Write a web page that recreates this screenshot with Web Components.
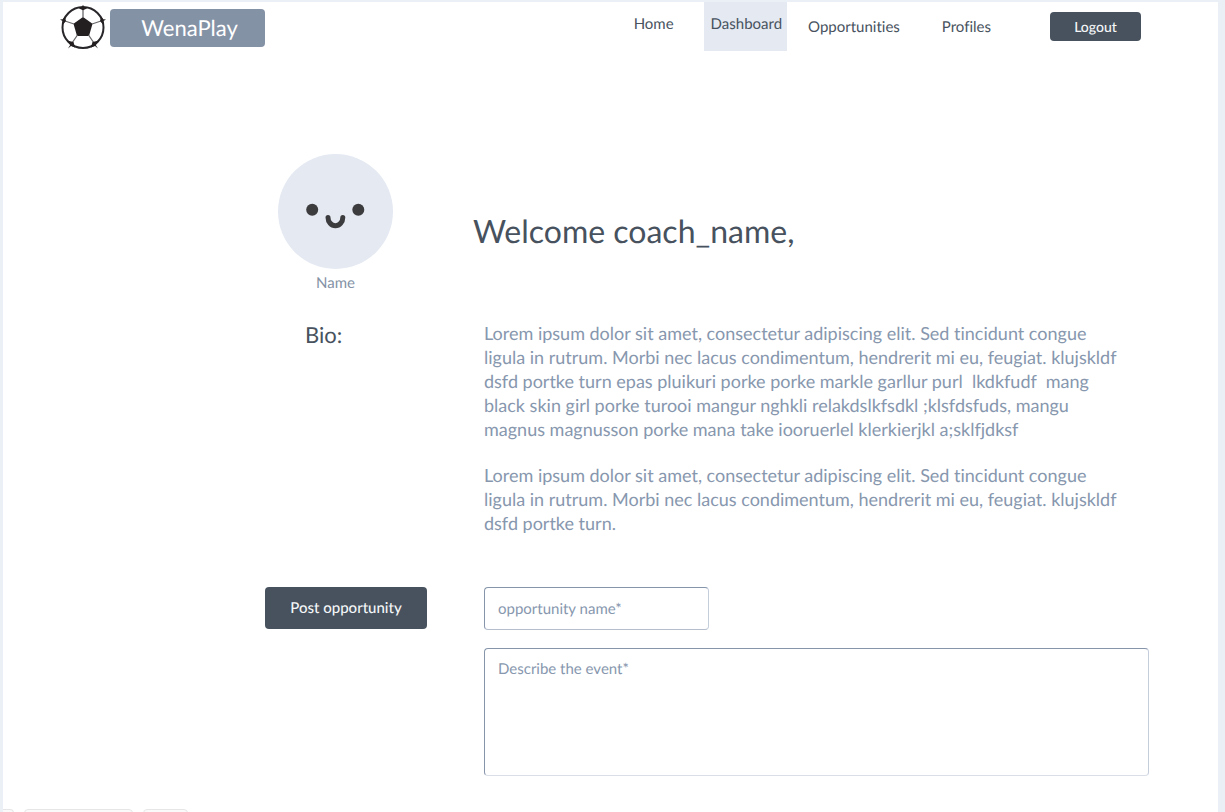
<!DOCTYPE html>
<html lang="en">
<head>
<meta charset="utf-8">
<meta name="viewport" content="width=device-width, initial-scale=1">
<title>WenaPlay – Dashboard</title>
<style>
  :root {
    --page: #ebeff6;
    --tint: #e4e9f2;
    --ink: #47525e;
    --muted: #8492a6;
    --text: #8797ae;
  }
  body {
    margin: 0;
    background: var(--page);
    color: var(--ink);
    font-family: Lato, "Open Sans", sans-serif;
    font-size: 15px;
    line-height: 20px;
    font-variant-ligatures: no-common-ligatures;
    text-rendering: geometricPrecision;
  }
</style>
</head>
<body>
<wena-page>
  <wena-header slot="header">
    <wena-link href="#home" high>Home</wena-link>
    <wena-link href="#dashboard" high current>Dashboard</wena-link>
    <wena-link href="#opportunities">Opportunities</wena-link>
    <wena-link href="#profiles">Profiles</wena-link>
    <wena-button slot="action" compact>Logout</wena-button>
  </wena-header>
  <wena-avatar slot="avatar">Name</wena-avatar>
  <wena-heading slot="welcome" level="1">Welcome coach_name,</wena-heading>
  <wena-heading slot="label" level="2">Bio:</wena-heading>
  <wena-bio slot="bio">
    <p>Lorem ipsum dolor sit amet, consectetur adipiscing elit. Sed tincidunt congue ligula in rutrum. Morbi nec lacus condimentum, hendrerit mi eu, feugiat. klujskldf dsfd portke turn epas pluikuri porke porke markle garllur purl&nbsp; lkdkfudf&nbsp; mang black skin girl porke turooi mangur nghkli relakdslkfsdkl ;klsfdsfuds, mangu magnus magnusson porke mana take iooruerlel klerkierjkl a;sklfjdksf</p>
    <p>Lorem ipsum dolor sit amet, consectetur adipiscing elit. Sed tincidunt congue ligula in rutrum. Morbi nec lacus condimentum, hendrerit mi eu, feugiat. klujskldf dsfd portke turn.</p>
  </wena-bio>
  <wena-button slot="post">Post opportunity</wena-button>
  <wena-form slot="form"></wena-form>
  <wena-tabs slot="footer"></wena-tabs>
</wena-page>

<script>
const define = (name, html, setup) => {
  const template = document.createElement('template');
  template.innerHTML = html;
  customElements.define(name, class extends HTMLElement {
    constructor() {
      super();
      this.attachShadow({ mode: 'open' }).append(template.content.cloneNode(true));
    }
    connectedCallback() {
      if (setup) setup(this, this.shadowRoot);
    }
  });
};

define('wena-page', `
  <style>
    :host { display: block; padding: 2px 7px 0 3px; }
    .sheet {
      box-sizing: border-box;
      min-height: calc(100vh - 2px);
      display: flex;
      flex-direction: column;
      background: #fff;
    }
    main {
      flex: 1;
      display: grid;
      grid-template-columns: 162px minmax(0, 1fr);
      column-gap: 57px;
      align-content: start;
      padding: 103px 69px 32px 262px;
    }
    ::slotted([slot=avatar]) { margin-left: 13px; }
    ::slotted([slot=welcome]) { margin: 57px 0 0 -11px; }
    ::slotted([slot=label]) { margin: 28px 0 0 40px; }
    ::slotted([slot=bio]) { margin: 28px 0 0; }
    ::slotted([slot=post]), ::slotted([slot=form]) { margin-top: 52px; }
  </style>
  <div class="sheet">
    <slot name="header"></slot>
    <main>
      <slot name="avatar"></slot>
      <slot name="welcome"></slot>
      <slot name="label"></slot>
      <slot name="bio"></slot>
      <slot name="post"></slot>
      <slot name="form"></slot>
    </main>
    <slot name="footer"></slot>
  </div>
`);

define('wena-header', `
  <style>
    :host { display: block; }
    header {
      display: flex;
      align-items: center;
      height: 49px;
      padding: 0 77px 0 57px;
    }
    .brand {
      display: flex;
      align-items: center;
      gap: 4px;
      padding-top: 3px;
      color: #fff;
      text-decoration: none;
    }
    .name {
      box-sizing: border-box;
      width: 155px;
      padding: 5px 0 5px 4px;
      border-radius: 4px;
      background: var(--muted);
      font-size: 22px;
      line-height: 28px;
      text-align: center;
    }
    nav {
      display: flex;
      align-items: center;
      align-self: stretch;
      margin-left: auto;
      margin-right: 38px;
    }
  </style>
  <header>
    <a class="brand" href="#home">
      <wena-ball></wena-ball>
      <span class="name">WenaPlay</span>
    </a>
    <nav aria-label="Main"><slot></slot></nav>
    <slot name="action"></slot>
  </header>
`);

define('wena-ball', `
  <style>
    :host { display: block; width: 46px; height: 46px; }
    svg { display: block; }
  </style>
  <svg width="46" height="46" viewBox="0 0 46 46" aria-hidden="true">
    <circle cx="23" cy="22.500" r="20.500" fill="#fff" stroke="#29272a" stroke-width="2"/>
    <path d="M23 12 L32.500 18.800 L29 31 L17 31 L13.500 18.800 Z" fill="#231f20"/>
    <path d="M23 13V4M32 19l9-3M28.500 30l5.500 8M17.500 30L12 38M14 19l-9-3" fill="none" stroke="#6a686b" stroke-width="1.300"/>
    <g fill="#231f20">
      <path d="M23 -.5l.8 2.200 4.700 1-5.500 2.600-5.500-2.600 4.700-1Z"/>
      <path d="M46 14.500l-2.500 1.500.4 4.500-3.900-4.500 1.300-4.500 2 2.800Z"/>
      <path d="M0 14.500l2.500 1.500-.4 4.500 3.900-4.500-1.300-4.500-2 2.800Z"/>
      <path d="M38 43.500l-2.200-3.500 3.200-4.500-6.500 1.500-1.500 5.500 4-1.500Z"/>
      <path d="M8 43.500l2.200-3.500L7 35.500l6.500 1.500 1.500 5.500-4-1.500Z"/>
    </g>
  </svg>
`);

define('wena-link', `
  <style>
    :host { display: flex; }
    :host([high]) { align-self: stretch; }
    a {
      padding: 0 21px;
      color: var(--ink);
      text-decoration: none;
    }
    :host([high]) a { padding-top: 12px; padding-right: 30px; }
    :host([current]) a { padding-left: 7px; padding-right: 5px; background: var(--tint); }
  </style>
  <a><slot></slot></a>
`, (host, root) => {
  const link = root.querySelector('a');
  link.href = host.getAttribute('href');
  if (host.hasAttribute('current')) link.setAttribute('aria-current', 'page');
});

define('wena-button', `
  <style>
    :host { display: block; }
    button {
      box-sizing: border-box;
      display: block;
      width: 100%;
      height: 42px;
      padding: 0;
      border: 0;
      border-radius: 4px;
      background: var(--ink);
      color: #f4f6f8;
      font: 500 15px/20px Lato, sans-serif;
      text-rendering: inherit;
      cursor: pointer;
    }
    :host([compact]) { width: 91px; }
    :host([compact]) button { height: 29px; font-size: 14px; }
  </style>
  <button type="button"><slot></slot></button>
`);

define('wena-avatar', `
  <style>
    :host { display: block; }
    figure {
      display: flex;
      flex-direction: column;
      align-items: center;
      gap: 4px;
      width: 115px;
      margin: 0;
      color: var(--muted);
    }
    svg { display: block; }
  </style>
  <figure>
    <svg width="115" height="115" viewBox="0 0 115 115" role="img" aria-label="Smiling face">
      <circle cx="57.500" cy="57.500" r="57.500" fill="#e4e9f2"/>
      <g fill="#3c3b3d">
        <circle cx="34.200" cy="55.800" r="6"/>
        <circle cx="80.300" cy="55.800" r="6"/>
      </g>
      <path d="M50 63.500a7.400 8.200 0 0 0 14.800 0" fill="none" stroke="#3c3b3d" stroke-width="5" stroke-linecap="round"/>
    </svg>
    <figcaption><slot></slot></figcaption>
  </figure>
`);

define('wena-heading', `
  <style>
    :host { display: block; }
    h1, h2 { margin: 0; font-weight: 400; }
    h1 { font-size: 32px; line-height: 40px; }
    h2 { font-size: 22px; line-height: 28px; }
  </style>
`, (host, root) => {
  const heading = document.createElement('h' + host.getAttribute('level'));
  heading.append(document.createElement('slot'));
  root.append(heading);
});

define('wena-bio', `
  <style>
    :host { display: block; color: var(--text); font-size: 18px; line-height: 24px; }
    ::slotted(p) { margin: 0 20px 22px 0; }
    ::slotted(p:last-child) { margin-bottom: 0; }
  </style>
  <slot></slot>
`);

define('wena-form', `
  <style>
    :host { display: block; }
    form { display: flex; flex-direction: column; gap: 18px; }
    input, textarea {
      box-sizing: border-box;
      display: block;
      margin: 0;
      padding: 10px 13px;
      border: 1px solid;
      border-color: #8795ab #c5cddb #b4becd #8795ab;
      border-radius: 4px;
      outline: 0;
      background: #fff;
      color: var(--ink);
      font: 15px/20px Lato, sans-serif;
      text-rendering: inherit;
      resize: none;
    }
    input { width: 225px; height: 43px; }
    textarea { width: 100%; height: 128px; border-bottom-color: #d9dee7; }
    ::placeholder { color: var(--text); opacity: 1; }
  </style>
  <form>
    <input type="text" name="name" aria-label="Opportunity name" placeholder="opportunity name*" required>
    <textarea name="description" aria-label="Describe the event" placeholder="Describe the event*" required></textarea>
  </form>
`);

define('wena-tabs', `
  <style>
    :host { display: block; }
    div { display: flex; gap: 10px; height: 3px; overflow: hidden; }
    span {
      box-sizing: border-box;
      height: 8px;
      border: 1px solid #e6e6e8;
      border-radius: 4px;
      background: #fafafa;
    }
    .edge { width: 11px; border-left: 0; border-radius: 0 4px 0 0; }
    .wide { width: 109px; }
    .narrow { width: 45px; }
  </style>
  <div aria-hidden="true"><span class="edge"></span><span class="wide"></span><span class="narrow"></span></div>
`);
</script>
</body>
</html>
